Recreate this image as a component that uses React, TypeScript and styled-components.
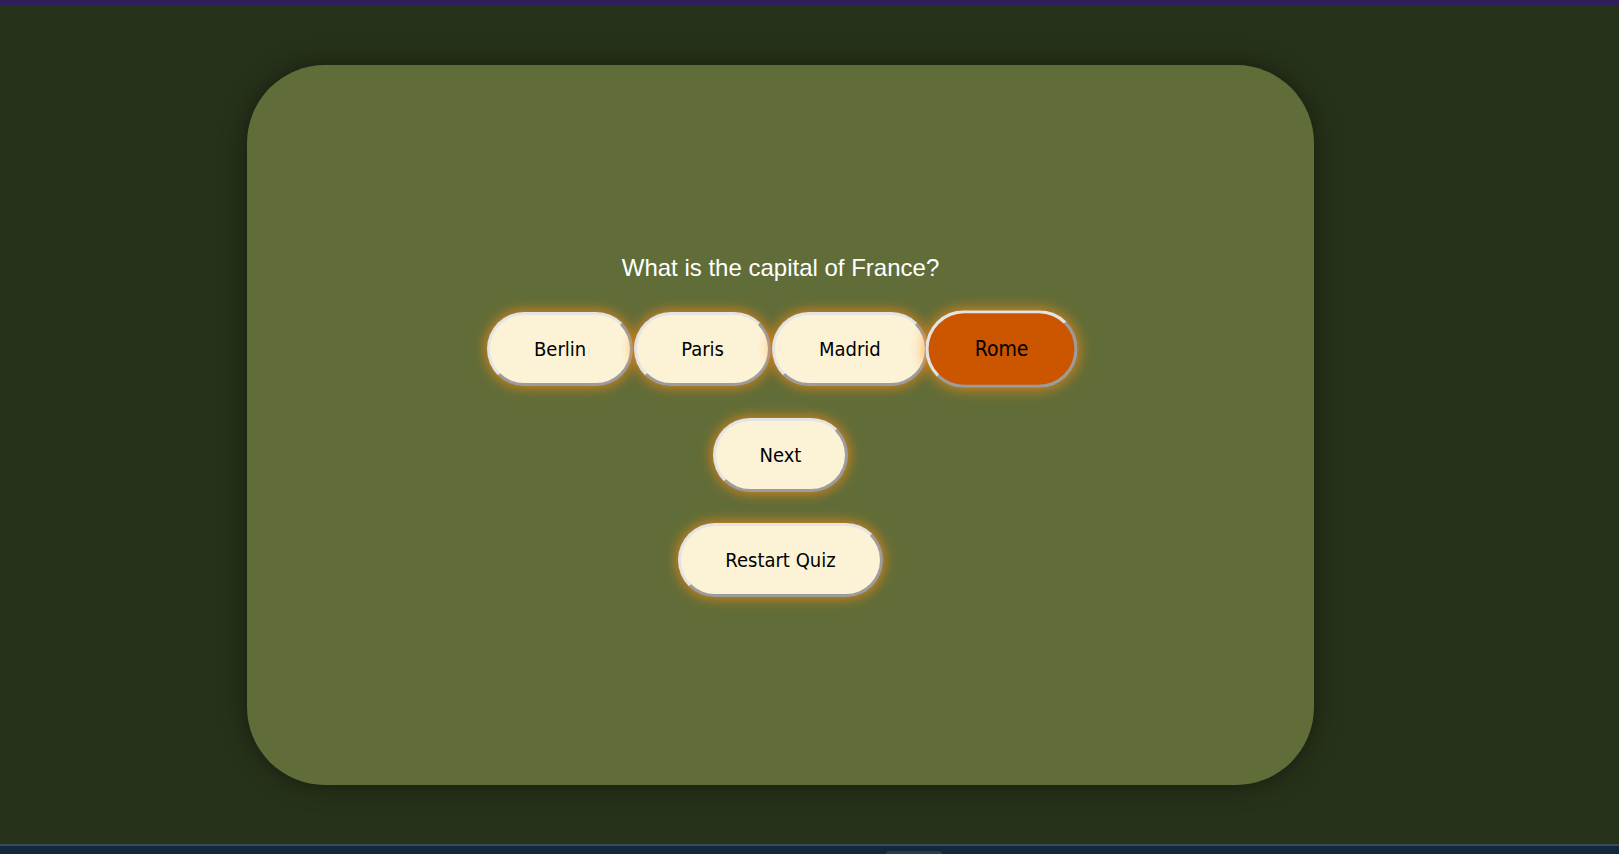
import React, { useState } from "react";
import styled, { createGlobalStyle } from "styled-components";

const GlobalStyle = createGlobalStyle`
  html, body {
    margin: 0;
    padding: 0;
    height: 100%;
    background: #27321a;
    overflow: hidden;
  }
  #root {
    height: 100%;
  }
`;

const Page = styled.div`
  display: flex;
  flex-direction: column;
  height: 854px;
  background: #27321a;
`;

const TopBar = styled.div`
  height: 5px;
  flex: none;
  background: #2c1f5a;
`;

const Main = styled.main`
  flex: 1;
  display: flex;
  align-items: flex-start;
  padding: 60px 0 0 247px;
`;

const Card = styled.section`
  width: 1067px;
  height: 720px;
  border-radius: 78px;
  background: #616d38;
  box-shadow: 0 0 26px rgba(0, 0, 0, 0.45);
  display: flex;
  flex-direction: column;
  align-items: center;
  justify-content: center;
`;

const Question = styled.h2`
  margin: 0 0 30px;
  font-family: "Liberation Sans", Arial, sans-serif;
  font-weight: normal;
  font-size: 24px;
  line-height: 28px;
  color: #ffffff;
`;

const Row = styled.div`
  display: flex;
  gap: 1px;
  margin-bottom: 32px;
`;

const Button = styled.button<{ $selected?: boolean }>`
  font-family: "DejaVu Sans Condensed", "DejaVu Sans", sans-serif;
  font-stretch: condensed;
  font-size: 20px;
  line-height: 24px;
  color: #000;
  padding: 22px 44px;
  border-width: 3px;
  border-style: solid;
  border-color: #e4e4e4 #9c9c9c #9c9c9c #e4e4e4;
  border-radius: 40px;
  background: ${(p) => (p.$selected ? "#cc5500" : "#fcf3d6")};
  box-shadow: 0 0 14px rgba(255, 140, 20, 0.9);
  transform: ${(p) => (p.$selected ? "scale(1.05)" : "none")};
  cursor: pointer;
  white-space: nowrap;
`;

const Stack = styled.div`
  display: flex;
  flex-direction: column;
  align-items: center;
  gap: 31px;
`;

const BottomBar = styled.div`
  position: relative;
  height: 8px;
  flex: none;
  background: #13283a;
  border-top: 2px solid #3b4a5a;
`;

const Tab = styled.div`
  position: absolute;
  left: 886px;
  bottom: 0;
  width: 56px;
  height: 3px;
  border-radius: 4px 4px 0 0;
  background: #2a3d4e;
`;

const options = ["Berlin", "Paris", "Madrid", "Rome"];

export default function App() {
  const [selected, setSelected] = useState("Rome");
  return (
    <>
      <GlobalStyle />
      <Page>
        <TopBar />
        <Main>
          <Card>
            <Question>What is the capital of France?</Question>
            <Row>
              {options.map((o) => (
                <Button key={o} $selected={selected === o} onClick={() => setSelected(o)}>
                  {o}
                </Button>
              ))}
            </Row>
            <Stack>
              <Button>Next</Button>
              <Button onClick={() => setSelected("")}>Restart Quiz</Button>
            </Stack>
          </Card>
        </Main>
        <BottomBar>
          <Tab />
        </BottomBar>
      </Page>
    </>
  );
}
